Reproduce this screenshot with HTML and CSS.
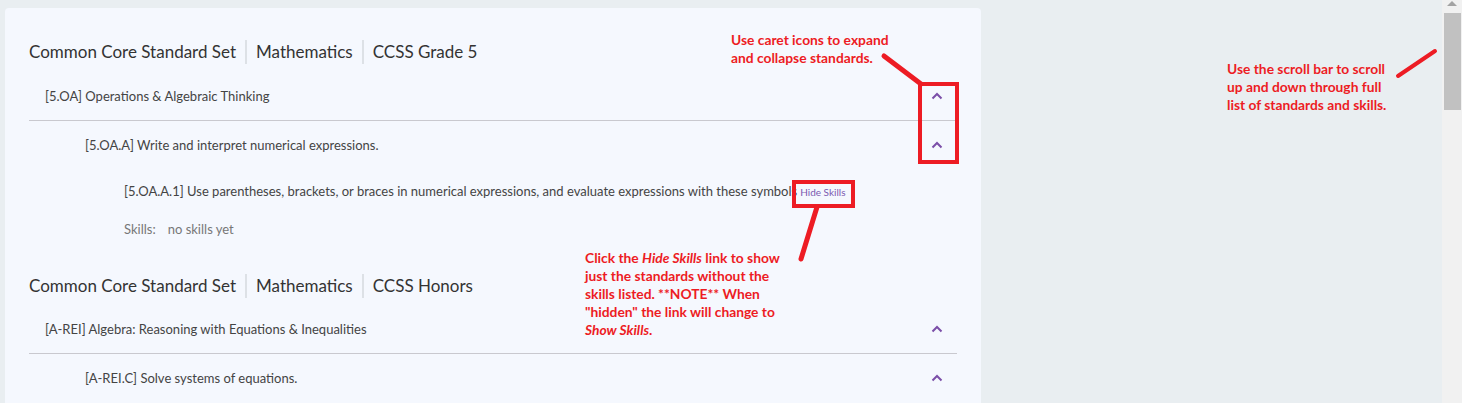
FILE: index.html
```html
<!DOCTYPE html>
<html lang="en">
<head>
<meta charset="UTF-8">
<title>Standards</title>
<link rel="stylesheet" href="styles.css">
</head>
<body>
<div class="card">
    <div class="set-title">
        <span>Common Core Standard Set</span>
        <span>Mathematics</span>
        <span>CCSS Grade 5</span>
    </div>
    <div class="row domain">
        <span>[5.OA] Operations &amp; Algebraic Thinking</span>
        <svg class="caret" width="12" height="8" viewBox="0 0 12 8"><path d="M1.5 6.5 L6 2 L10.5 6.5"/></svg>
    </div>
    <div class="row cluster">
        <span>[5.OA.A] Write and interpret numerical expressions.</span>
        <svg class="caret" width="12" height="8" viewBox="0 0 12 8"><path d="M1.5 6.5 L6 2 L10.5 6.5"/></svg>
    </div>
    <div class="standard">
        [5.OA.A.1] Use parentheses, brackets, or braces in numerical expressions, and evaluate expressions with these symbols<a class="skills-link">Hide Skills</a>
    </div>
    <div class="skills">
        <span>Skills:</span>
        <span>no skills yet</span>
    </div>

    <div class="set-title second">
        <span>Common Core Standard Set</span>
        <span>Mathematics</span>
        <span>CCSS Honors</span>
    </div>
    <div class="row domain">
        <span>[A-REI] Algebra: Reasoning with Equations &amp; Inequalities</span>
        <svg class="caret" width="12" height="8" viewBox="0 0 12 8"><path d="M1.5 6.5 L6 2 L10.5 6.5"/></svg>
    </div>
    <div class="row cluster">
        <span>[A-REI.C] Solve systems of equations.</span>
        <svg class="caret" width="12" height="8" viewBox="0 0 12 8"><path d="M1.5 6.5 L6 2 L10.5 6.5"/></svg>
    </div>
</div>

<div class="scrollbar">
    <div class="scroll-arrow"></div>
    <div class="scroll-thumb"></div>
</div>

<!-- help annotations drawn over the page -->
<div class="note note-caret">Use caret icons to expand<br>and collapse standards.</div>
<div class="note note-skills">Click the <i>Hide Skills</i> link to show<br>just the standards without the<br>skills listed. **NOTE** When<br>"hidden" the link will change to<br><i>Show Skills</i>.</div>
<div class="note note-scroll">Use the scroll bar to scroll<br>up and down through full<br>list of standards and skills.</div>
<div class="red-box box-caret"></div>
<div class="red-box box-skills"></div>
<svg class="arrows" width="1462" height="403">
    <line x1="884" y1="56" x2="921" y2="84"/>
    <line x1="817" y1="207" x2="801" y2="259"/>
    <line x1="1398" y1="76" x2="1435" y2="51" class="thin"/>
</svg>
</body>
</html>
```

FILE: styles.css
```css
body {
    margin: 0;
    padding: 0;
    height: 403px;
    overflow: hidden;
    background-color: #e9eef1;
    font-family: Lato, "Noto Sans", sans-serif;
    color: #3a3a3a;
    display: flex;
    position: relative;
}
.card {
    width: 928px;
    margin: 8px 0 0 5px;
    padding: 32px 24px 0 24px;
    background-color: #f5f8fe;
    border-radius: 4px 4px 0 0;
}
.set-title {
    display: flex;
    align-items: center;
    font-size: 17px;
    line-height: 24px;
    color: #333;
}
.set-title span {
    padding: 0 9px;
    border-left: 2px solid #dde1e6;
}
.set-title span:first-child {
    padding-left: 0;
    border-left: none;
}
.set-title.second {
    margin-top: 35px;
}
.row {
    display: flex;
    justify-content: space-between;
    align-items: center;
    height: 48px;
    padding-right: 14px;
    font-size: 13px;
    color: #444;
}
.row.domain {
    margin-top: 8px;
    padding-left: 16px;
    border-bottom: 1px solid #c9c9cf;
}
.second + .row.domain {
    margin-top: 7px;
}
.row.cluster {
    padding-left: 56px;
}
.caret path {
    fill: none;
    stroke: #7b4fa8;
    stroke-width: 2;
}
.standard {
    margin-top: 12px;
    padding-left: 95px;
    font-size: 13px;
    line-height: 20px;
    color: #444;
}
.skills-link {
    margin-left: 3px;
    font-size: 10px;
    color: #7b58b0;
    cursor: pointer;
}
.skills {
    display: flex;
    gap: 12px;
    margin-top: 17px;
    padding-left: 95px;
    font-size: 13px;
    line-height: 20px;
    color: #777;
}
.scrollbar {
    margin-left: auto;
    width: 20px;
    height: 100%;
    background-color: #f1f1f1;
    position: relative;
}
.scroll-arrow {
    width: 0;
    height: 0;
    margin: 1px auto 0 auto;
    border-left: 5px solid transparent;
    border-right: 5px solid transparent;
    border-bottom: 5px solid #a3a3a3;
}
.scroll-thumb {
    margin: 7px 1px 0 2px;
    height: 97px;
    background-color: #c1c1c1;
}
.note {
    position: absolute;
    font-family: Lato, "Liberation Sans", sans-serif;
    font-weight: bold;
    font-size: 13.8px;
    line-height: 18px;
    color: #ed1c24;
}
.note-caret {
    left: 731px;
    top: 31px;
}
.note-skills {
    left: 585px;
    top: 249px;
}
.note-scroll {
    left: 1227px;
    top: 60px;
}
.red-box {
    position: absolute;
    border: 4px solid #ed1c24;
    box-sizing: border-box;
}
.box-caret {
    left: 918px;
    top: 82px;
    width: 41px;
    height: 82px;
}
.box-skills {
    left: 792px;
    top: 180px;
    width: 63px;
    height: 28px;
}
.arrows {
    position: absolute;
    left: 0;
    top: 0;
}
.arrows line {
    stroke: #ed1c24;
    stroke-width: 5;
    stroke-linecap: round;
}
.arrows line.thin {
    stroke-width: 4;
}
```
